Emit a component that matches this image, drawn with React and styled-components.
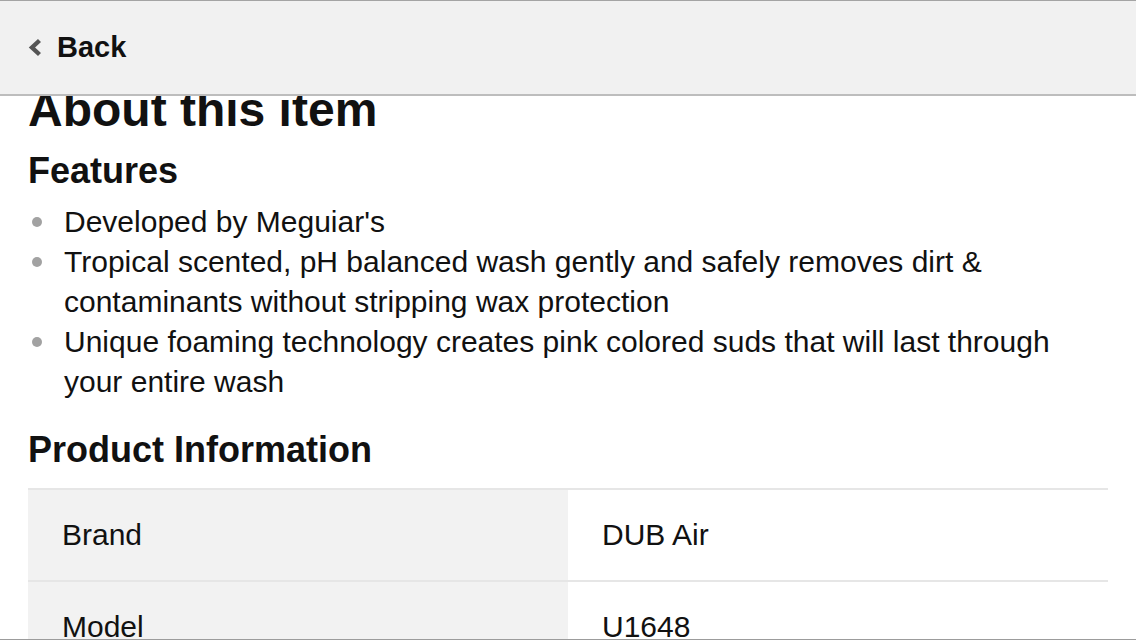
import React, { useLayoutEffect, useRef } from "react";
import styled, { createGlobalStyle } from "styled-components";

const GlobalStyle = createGlobalStyle`
    html, body {
        margin: 0;
        padding: 0;
        background: #ffffff;
    }
    body {
        font-family: "Liberation Sans", Arial, Helvetica, sans-serif;
        color: #111111;
    }
`;

const Screen = styled.div`
    height: 100vh;
    box-sizing: border-box;
    display: flex;
    flex-direction: column;
    border-top: 1px solid #a4a4a4;
    border-bottom: 1px solid #9c9c9c;
    overflow: hidden;
`;

const TopBar = styled.header`
    flex: none;
    height: 93px;
    display: flex;
    align-items: center;
    padding: 0 27px;
    background: #f1f1f1;
    border-bottom: 2px solid #bdbdbd;
    position: relative;
    z-index: 1;
`;

const BackButton = styled.button`
    display: flex;
    align-items: center;
    gap: 14px;
    padding: 0;
    border: none;
    background: none;
    font-family: inherit;
    font-size: 29px;
    font-weight: 700;
    color: #111111;
    cursor: pointer;

    svg {
        flex: none;
        display: block;
    }
`;

// 스크롤된 상태를 재현하기 위한 영역
const Scroller = styled.main`
    flex: 1;
    overflow: hidden;
    padding: 20px 28px 40px;
`;

const Title = styled.h1`
    margin: 0;
    font-size: 48px;
    line-height: 56px;
    font-weight: 700;
`;

const SubTitle = styled.h2`
    margin: ${({ $top }) => $top}px 0 0;
    font-size: 36px;
    line-height: 44px;
    font-weight: 700;
`;

const List = styled.ul`
    list-style: none;
    margin: 9px 0 0;
    padding: 0;
`;

const Item = styled.li`
    display: flex;
    font-size: 30px;
    line-height: 40px;
`;

const Dot = styled.span`
    flex: none;
    width: 10px;
    height: 10px;
    margin: 15px 22px 0 4px;
    border-radius: 50%;
    background: #a2a2a2;
`;

const Table = styled.div`
    margin-top: 16px;
    border-top: 2px solid #e6e6e6;
`;

const Row = styled.div`
    display: grid;
    grid-template-columns: 1fr 1fr;
    border-bottom: 2px solid #e6e6e6;
`;

const Cell = styled.div`
    padding: 25px 34px;
    font-size: 30px;
    line-height: 40px;
    background: ${({ $head }) => ($head ? "#f2f2f2" : "#ffffff")};
`;

const features = [
    "Developed by Meguiar's",
    "Tropical scented, pH balanced wash gently and safely removes dirt & contaminants without stripping wax protection",
    "Unique foaming technology creates pink colored suds that will last through your entire wash",
];

const info = [
    ["Brand", "DUB Air"],
    ["Model", "U1648"],
    ["Size", "64 oz"],
];

const ChevronLeft = () => (
    <svg width="16" height="19" viewBox="0 0 16 19">
        <path d="M12.5 2.5 L5 9.5 L12.5 16.5" fill="none" stroke="#555555" strokeWidth="4.4" />
    </svg>
);

const App = () => {
    const scrollRef = useRef(null);

    useLayoutEffect(() => {
        if (scrollRef.current) scrollRef.current.scrollTop = 34;
    }, []);

    return (
        <>
            <GlobalStyle/>
            <Screen>
                <TopBar>
                    <BackButton>
                        <ChevronLeft/>
                        Back
                    </BackButton>
                </TopBar>
                <Scroller ref={scrollRef}>
                    <Title>About this item</Title>
                    <SubTitle $top={11}>Features</SubTitle>
                    <List>
                        {features.map((text) => (
                            <Item key={text}>
                                <Dot/>
                                <span>{text}</span>
                            </Item>
                        ))}
                    </List>
                    <SubTitle $top={26}>Product Information</SubTitle>
                    <Table>
                        {info.map(([label, value]) => (
                            <Row key={label}>
                                <Cell $head>{label}</Cell>
                                <Cell>{value}</Cell>
                            </Row>
                        ))}
                    </Table>
                </Scroller>
            </Screen>
        </>
    );
};

export default App;
